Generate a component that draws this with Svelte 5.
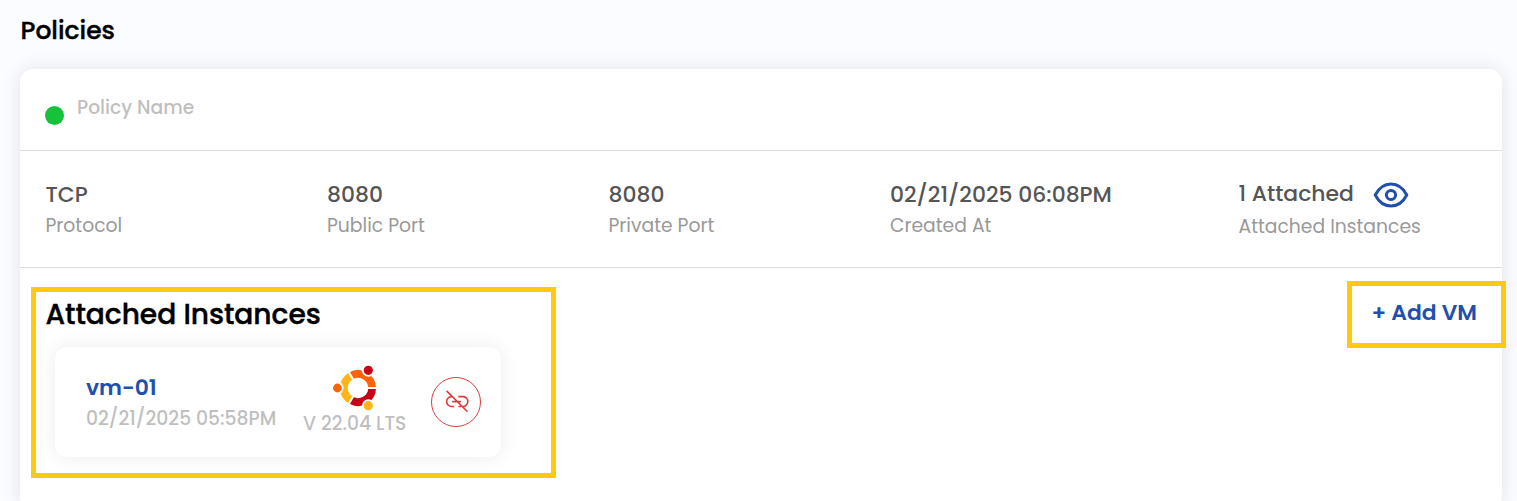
<script>
  const stats = [
    { value: 'TCP', label: 'Protocol' },
    { value: '8080', label: 'Public Port' },
    { value: '8080', label: 'Private Port' },
    { value: '02/21/2025 06:08PM', label: 'Created At' }
  ];
</script>

<main>
  <h1>Policies</h1>
  <section class="card">
    <header>
      <span class="dot"></span>
      <span class="name">Policy Name</span>
    </header>
    <div class="stats">
      {#each stats as s}
        <div class="stat">
          <div class="value">{s.value}</div>
          <div class="label">{s.label}</div>
        </div>
      {/each}
      <div class="stat attached">
        <div class="value">
          <span>1 Attached</span>
          <svg class="eye" width="36" height="28" viewBox="0 0 36 28" fill="none" stroke="#204fae" stroke-width="3" stroke-linejoin="round">
            <path d="M2.2 14C6 6.8 11.5 3 18 3s12 3.8 15.800 11C30 21.200 24.500 25 18 25S6 21.200 2.200 14Z" />
            <circle cx="18" cy="14" r="4.600" />
          </svg>
        </div>
        <div class="label">Attached Instances</div>
      </div>
    </div>
    <div class="body">
      <div class="left">
        <h2>Attached Instances</h2>
        <article class="vm">
          <div class="info">
            <div class="vm-name">vm-01</div>
            <div class="date">02/21/2025 05:58PM</div>
          </div>
          <div class="os">
            <svg width="48" height="48" viewBox="-25 -24 48 48">
              <g fill="none" stroke-width="7.800">
                <path stroke="#ff6309" d="M-7.050 -12.210A14.100 14.100 0 0 1 14.100 0" />
                <path stroke="#c90016" d="M14.100 0A14.100 14.100 0 0 1 -7.050 12.210" />
                <path stroke="#ffb515" d="M-7.050 12.210A14.100 14.100 0 0 1 -7.050 -12.210" />
              </g>
              <path d="M8 0H20M-4 -6.930L-10 -17.320M-4 6.930L-10 17.320" stroke="#fff" stroke-width="2" />
              <g stroke="#fff" stroke-width="1.800">
                <circle cx="-20.600" cy="0" r="5.300" fill="#ff6309" />
                <circle cx="10.300" cy="-17.700" r="5.500" fill="#c90016" />
                <circle cx="10.300" cy="17.700" r="5.500" fill="#ffb515" />
              </g>
            </svg>
            <div class="version">V 22.04 LTS</div>
          </div>
          <button aria-label="Detach">
            <svg width="26" height="26" viewBox="0 0 26 26" fill="none" stroke="#dc3c3c" stroke-width="1.600">
              <path d="M9.700 7.600H8.600A4.950 4.950 0 0 0 8.600 17.500H11.200M15.300 7.600H19.600A4.950 4.950 0 0 1 20.200 17.500M15.500 17.500H18M9.200 12.600H17.800M3.600 1.900L24.500 22.800" />
            </svg>
          </button>
        </article>
      </div>
      <a class="add" href="#add">+ Add VM</a>
    </div>
  </section>
  <div class="mark mark-vm"></div>
  <div class="mark mark-add"></div>
</main>

<style>
  :global(body) { background: #fafcff; }
  main {
    position: relative;
    height: 501px;
    overflow: hidden;
    padding: 0 15px 0 20px;
    box-sizing: border-box;
    font-family: Poppins, Inter, sans-serif;
    white-space: nowrap;
  }
  h1, h2 { font-weight: 500; color: #000; -webkit-text-stroke: 0.4px #000; }
  h1 { margin: 0 0 7px 0.5px; font-size: 25px; line-height: 62px; }
  .card { height: 440px; background: #fff; border-radius: 13px; box-shadow: 0 0 20px rgba(0, 0, 0, 0.1); }
  header { display: flex; height: 81px; border-bottom: 1px solid #dcdcdc; padding-left: 25px; gap: 13px; }
  .dot { width: 19px; height: 19px; margin-top: 37px; border-radius: 50%; background: #15c23a; }
  .name { margin-top: 25px; line-height: 28px; font-size: 18.75px; font-weight: 500; color: #bfbfbf; }
  .stats {
    display: grid;
    grid-template-columns: 281.5px 281.5px 281.5px 348.5px 1fr;
    height: 116px;
    padding-left: 25.5px;
    border-bottom: 1px solid #dcdcdc;
  }
  .stat { padding-top: 27px; }
  .value { font-size: 21.875px; line-height: 33px; height: 33px; font-weight: 500; color: #555; }
  .label { font-size: 18.75px; line-height: 30px; color: #999; }
  .attached { padding-top: 26px; }
  .attached .value { display: flex; gap: 19px; height: 35px; }
  .eye { margin-top: 4px; }
  .body { display: flex; justify-content: space-between; align-items: flex-start; padding: 0 25px 0 26px; }
  h2 { margin: 26px 0 13px -0.5px; font-size: 28.125px; line-height: 40px; letter-spacing: -0.05px; }
  .vm {
    display: flex;
    width: 446px;
    height: 110px;
    box-sizing: border-box;
    margin-left: 9px;
    padding: 0 20px 0 31px;
    border-radius: 12px;
    background: #fff;
    box-shadow: 0 0 20px rgba(0, 0, 0, 0.08);
  }
  .info { width: 217px; padding-top: 25px; }
  .vm-name { font-size: 21.875px; line-height: 32px; font-weight: 600; color: #204fae; }
  .date { font-size: 18.75px; line-height: 30px; font-weight: 500; color: #bfbfbf; }
  .os { flex: 1; padding-top: 17px; }
  .os svg { display: block; margin-left: 30px; }
  .version { line-height: 24px; font-size: 18.75px; font-weight: 500; color: #bfbfbf; }
  button {
    display: grid;
    place-items: center;
    width: 50px;
    height: 50px;
    margin-top: 30px;
    padding: 0;
    border: 1px solid #dc3c3c;
    border-radius: 50%;
    background: #fff;
  }
  .add { margin-top: 29px; line-height: 32px; font-size: 21.875px; font-weight: 600; color: #204fae; text-decoration: none; }
  .mark { position: absolute; box-sizing: border-box; border: 5px solid #ffc90e; }
  .mark-vm { left: 31px; top: 287px; width: 525px; height: 191px; }
  .mark-add { left: 1347px; top: 281px; width: 159px; height: 67px; }
</style>
